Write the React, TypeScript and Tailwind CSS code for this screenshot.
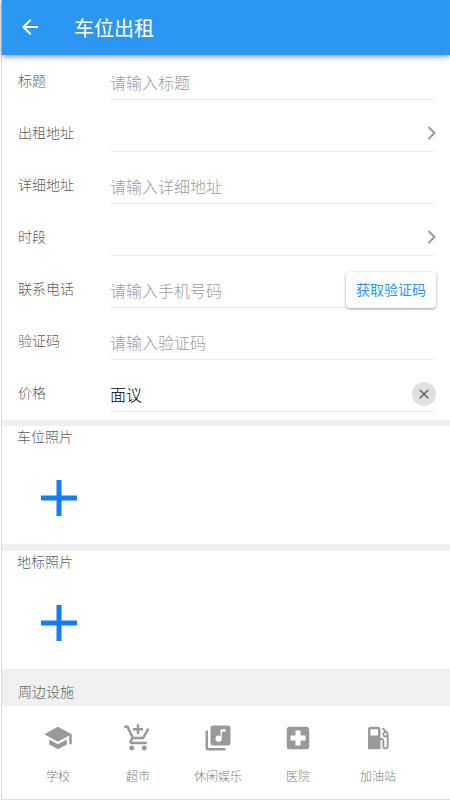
import { useState } from "react";
import type { ComponentType, ReactNode } from "react";
import {
  MdAddShoppingCart,
  MdArrowBack,
  MdLibraryMusic,
  MdLocalGasStation,
  MdLocalHospital,
  MdSchool,
} from "react-icons/md";

const inputClass =
  "h-9 w-full min-w-0 flex-1 rounded-none border-b border-[#efefef] bg-transparent text-base font-light text-black outline-none placeholder:text-[#9c9c9c]";

function Row({ id, label, children }: { id: string; label: string; children: ReactNode }) {
  return (
    <div className="flex h-13 items-center pr-3.5 pl-4">
      <label htmlFor={id} className="w-23 shrink-0 pb-1 text-sm text-[#625c5c]">
        {label}
      </label>
      {children}
    </div>
  );
}

function TextRow({ id, label, placeholder }: { id: string; label: string; placeholder: string }) {
  return (
    <Row id={id} label={label}>
      <input id={id} type="text" placeholder={placeholder} className={inputClass} />
    </Row>
  );
}

function PickerRow({ id, label }: { id: string; label: string }) {
  return (
    <Row id={id} label={label}>
      <button
        id={id}
        type="button"
        className="flex h-9 flex-1 items-center justify-end border-b border-[#efefef] pb-0.5"
      >
        <svg width="9" height="14" viewBox="0 0 9 14" fill="none" stroke="#999" strokeWidth="2" aria-hidden="true">
          <path d="M1.5 1 7.5 7 1.5 13" />
        </svg>
      </button>
    </Row>
  );
}

function PhotoSection({ title }: { title: string }) {
  return (
    <section className="bg-white pb-7">
      <h2 className="pl-[15px] text-sm text-[#606060]">{title}</h2>
      <button type="button" aria-label={`添加${title}`} className="mt-[34px] ml-[39px] block">
        <svg width="36" height="36" viewBox="0 0 36 36" stroke="#147cff" strokeWidth="5" aria-hidden="true">
          <path d="M18 0V36M0 18H36" />
        </svg>
      </button>
    </section>
  );
}

function Facility({ icon: Icon, name }: { icon: ComponentType<{ size?: number }>; name: string }) {
  return (
    <button type="button" className="flex w-20 flex-col items-center">
      <span className="text-[#999]">
        <Icon size={30} />
      </span>
      <span className="mt-[15px] text-xs text-[#7c7c7c]">{name}</span>
    </button>
  );
}

export default function App() {
  const [price, setPrice] = useState("面议");

  return (
    <div className="ml-px border-b border-l border-[#dedede] bg-[#f0f0f0] font-['Noto_Sans_CJK_SC',sans-serif] font-light">
      <header className="relative flex h-[55px] items-center bg-[#2c97f2] pl-4 text-white shadow-[0_1px_6px_rgba(0,0,0,0.5)]">
        <button type="button" aria-label="返回" className="pb-0.5">
          <MdArrowBack size={24} />
        </button>
        <h1 className="ml-8 text-xl font-normal">车位出租</h1>
      </header>

      <main>
        <form className="bg-white pt-px" onSubmit={(e) => e.preventDefault()}>
          <TextRow id="title" label="标题" placeholder="请输入标题" />
          <PickerRow id="area" label="出租地址" />
          <TextRow id="address" label="详细地址" placeholder="请输入详细地址" />
          <PickerRow id="period" label="时段" />
          <Row id="phone" label="联系电话">
            <input id="phone" type="tel" placeholder="请输入手机号码" className={inputClass} />
            <button
              type="button"
              className="h-9 shrink-0 rounded-sm bg-white px-2.5 pb-0.5 text-sm font-normal text-[#2c97f2] shadow-[0_1px_3px_rgba(0,0,0,0.4)]"
            >
              获取验证码
            </button>
          </Row>
          <TextRow id="code" label="验证码" placeholder="请输入验证码" />
          <Row id="price" label="价格">
            <div className="flex flex-1 items-center border-b border-[#efefef]">
              <input
                id="price"
                type="text"
                value={price}
                onChange={(e) => setPrice(e.target.value)}
                className="h-[35px] w-full min-w-0 flex-1 bg-transparent text-base font-light text-black outline-none"
              />
              <button
                type="button"
                aria-label="清除价格"
                onClick={() => setPrice("")}
                className="flex size-6 items-center justify-center rounded-full bg-[#e0e0e0]"
              >
                <svg width="10" height="10" viewBox="0 0 10 10" stroke="#666" strokeWidth="1.6" aria-hidden="true">
                  <path d="M.7.7 9.3 9.3M9.3.7.7 9.3" />
                </svg>
              </button>
            </div>
          </Row>
        </form>

        <div className="mt-1.5 flex flex-col gap-[7px]">
          <PhotoSection title="车位照片" />
          <PhotoSection title="地标照片" />
        </div>

        <section>
          <h2 className="pt-3 pb-[5px] pl-4 text-sm text-[#606060]">周边设施</h2>
          <div className="flex flex-wrap bg-white pt-[17px] pb-[15px] pl-4">
            <Facility icon={MdSchool} name="学校" />
            <Facility icon={MdAddShoppingCart} name="超市" />
            <Facility icon={MdLibraryMusic} name="休闲娱乐" />
            <Facility icon={MdLocalHospital} name="医院" />
            <Facility icon={MdLocalGasStation} name="加油站" />
          </div>
        </section>
      </main>
    </div>
  );
}
